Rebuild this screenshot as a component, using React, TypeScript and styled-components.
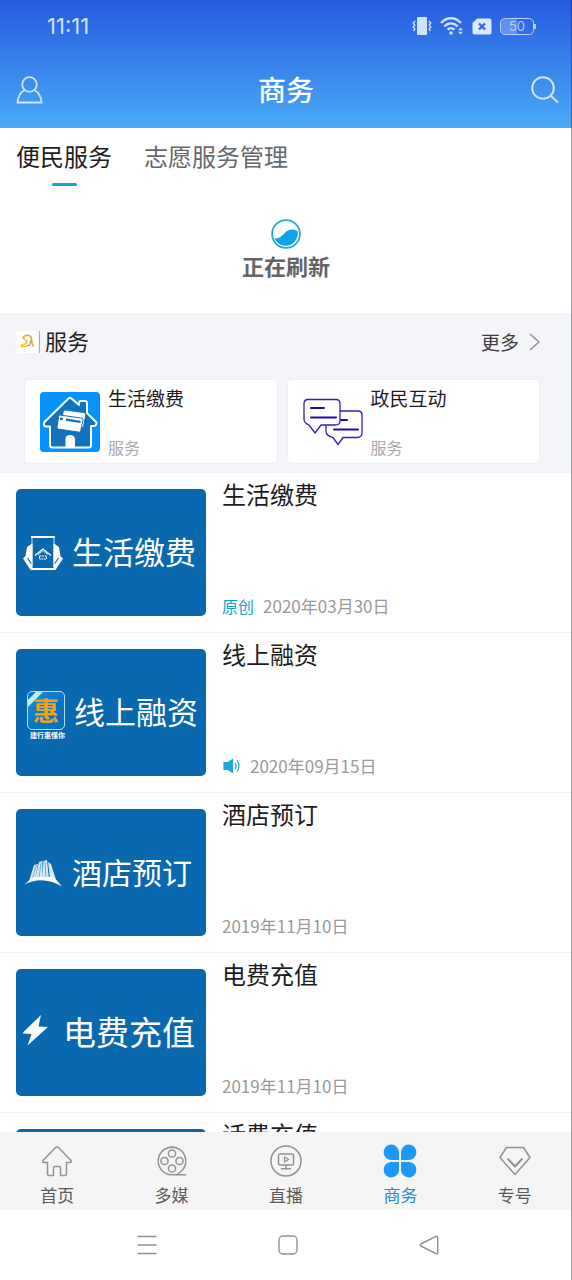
import React from "react";
import styled, { createGlobalStyle } from "styled-components";

const GlobalStyle = createGlobalStyle`
  * { box-sizing: border-box; }
  body {
    margin: 0;
    background: #fff;
    color: #1d1d1f;
    font-family: "Noto Sans CJK SC", "Noto Sans", sans-serif;
  }
  button {
    border: 0;
    padding: 0;
    background: none;
    color: inherit;
    font: inherit;
    cursor: pointer;
  }
  a { color: inherit; text-decoration: none; }
  h1, h2, h3, p, ul { margin: 0; padding: 0; font-weight: 400; }
  ul { list-style: none; }
  svg { display: block; flex: none; }
`;

const Screen = styled.div`
  position: relative;
  display: flex;
  flex-direction: column;
  height: 100vh;
  overflow: hidden;

  &::after {
    content: "";
    position: absolute;
    inset: 0 0 0 auto;
    width: 1px;
    background: rgba(20, 24, 32, 0.4);
    pointer-events: none;
  }
`;

const Header = styled.header`
  flex: none;
  color: #fff;
  background: linear-gradient(#265be0, #3a86ec 55%, #4aaaf6);
`;

const StatusBar = styled.div`
  display: flex;
  align-items: center;
  justify-content: space-between;
  height: 52px;
  padding: 0 38px 0 47px;
  color: #d3e2fb;
`;

const Clock = styled.time`
  font: 400 22px/28px Inter, sans-serif;
`;

const StatusIcons = styled.div`
  display: flex;
  align-items: center;
  gap: 8px;
`;

const Battery = styled.span`
  position: relative;
  width: 34px;
  height: 17px;
  border: 1px solid #b9cff8;
  border-radius: 5px;
  background: linear-gradient(90deg, rgba(190, 212, 250, 0.35) 50%, transparent 50%);
  color: #b9cff8;
  text-align: center;
  font: 400 13px/15px Inter, sans-serif;

  &::after {
    content: "";
    position: absolute;
    top: 5px;
    right: -3px;
    width: 2px;
    height: 5px;
    background: #b9cff8;
  }
`;

const AppBar = styled.div`
  display: grid;
  grid-template-columns: 1fr auto 1fr;
  align-items: center;
  height: 76px;
  padding: 0 13px;
`;

const PageTitle = styled.h1`
  padding-bottom: 2px;
  font-size: 28px;
  line-height: 40px;
  font-weight: 500;
`;

const IconButton = styled.button<{ $end?: boolean }>`
  justify-self: ${(p) => (p.$end ? "end" : "start")};
  padding-left: 3px;
  color: #cfe6fd;
`;

const Content = styled.main`
  flex: 1;
  min-height: 0;
  overflow-y: auto;
  scrollbar-width: none;
`;

const Tabs = styled.nav`
  display: flex;
  gap: 32px;
  padding: 11px 16px 0;
`;

const Tab = styled.button<{ $active?: boolean }>`
  display: flex;
  flex-direction: column;
  align-items: center;
  gap: 10px;
  font-size: 24px;
  line-height: 34px;
  color: ${(p) => (p.$active ? "#1d1d1f" : "#66686b")};

  &::after {
    content: "";
    width: 25px;
    height: 3px;
    border-radius: 2px;
    background: ${(p) => (p.$active ? "#12a3dc" : "transparent")};
  }
`;

const Refresh = styled.div`
  display: flex;
  flex-direction: column;
  align-items: center;
  gap: 1px;
  padding: 33px 0;
  color: #646464;
  font-size: 22px;
  line-height: 30px;
  font-weight: 700;
`;

const Services = styled.section`
  padding: 0 32px 9px 16px;
  background: #f4f5f8;
`;

const ServicesHead = styled.div`
  display: flex;
  align-items: center;
  height: 58px;
`;

const ServicesTitle = styled.h2`
  margin-left: 1px;
  padding: 0 0 3px 5px;
  border-left: 1px solid #a8aaae;
  font-size: 22px;
  line-height: 19px;
`;

const More = styled.a`
  display: flex;
  align-items: center;
  gap: 10px;
  margin-left: auto;
  color: #3c3e42;
  font-size: 19px;
  line-height: 28px;
`;

const CardGrid = styled.div`
  display: grid;
  grid-template-columns: 1fr 1fr;
  gap: 9px;
  padding: 8px 0 0 8px;
`;

const Card = styled.a`
  display: flex;
  align-items: center;
  gap: 8px;
  min-height: 85px;
  padding: 0 15px;
  border: 1px solid #eef0f3;
  border-radius: 5px;
  background: #fff;
`;

const CardText = styled.div`
  display: flex;
  flex-direction: column;
  justify-content: space-between;
  align-self: stretch;
  padding: 6px 0 4px;
  line-height: 24px;
`;

const CardName = styled.h3`
  font-size: 19px;
`;

const CardKind = styled.p`
  color: #a9a9a9;
  font-size: 16px;
`;

const Row = styled.li`
  border-bottom: 1px solid #f2f2f2;
`;

const RowLink = styled.a`
  display: flex;
  gap: 16px;
  padding: 0 16px;
`;

const Thumb = styled.div`
  display: flex;
  align-items: center;
  flex: 0 0 190px;
  gap: 9px;
  height: 127px;
  margin: 16px 0;
  padding-left: 7px;
  border-radius: 5px;
  background: #0a68ae;
  color: #fff;
  white-space: nowrap;
`;

const ThumbTitle = styled.span<{ $size: number }>`
  padding-bottom: 4px;
  font-size: ${(p) => p.$size}px;
  line-height: 44px;
`;

const BankLogo = styled.div`
  display: flex;
  flex-direction: column;
  align-items: flex-end;
  gap: 1px;
  width: 42px;
  padding-top: 6px;
`;

const BankTile = styled.span`
  width: 38px;
  height: 39px;
  border: 1px solid #b5dcf8;
  border-radius: 5px;
  background: linear-gradient(135deg, #0875c6 5px, #c5eefb 6px, #c5eefb 10px, #1687d0 11px, #0875c6 55%, #0b6dbb);
  color: #f1a21c;
  font-size: 26px;
  line-height: 36px;
  font-weight: 700;
  text-align: center;
`;

const BankCaption = styled.span`
  font-size: 7px;
  line-height: 9px;
  font-weight: 700;
`;

const RowText = styled.div`
  display: flex;
  flex: 1;
  flex-direction: column;
  justify-content: space-between;
  min-width: 0;
  padding: 7px 0 14px;
`;

const RowTitle = styled.h3`
  font-size: 24px;
  line-height: 28px;
`;

const Meta = styled.p`
  display: flex;
  align-items: center;
  gap: 9px;
  color: #999;
  font-size: 17px;
  line-height: 24px;
`;

const Badge = styled.span`
  color: #1aa3c9;
  font-size: 16px;
`;

const TabBar = styled.nav`
  display: flex;
  flex: none;
  height: 78px;
  background: #f5f5f5;
`;

const TabItem = styled.button<{ $active?: boolean }>`
  display: flex;
  flex: 1;
  flex-direction: column;
  align-items: center;
  gap: 5px;
  padding-top: 12px;
  color: ${(p) => (p.$active ? "#1d8fd0" : "#5c5c5c")};
  font-size: 17px;
  line-height: 24px;
`;

const SystemNav = styled.nav`
  display: flex;
  flex: none;
  align-items: center;
  height: 70px;
  padding: 0 73px 0 76px;
  background: #fff;
`;

const SystemButton = styled.button`
  display: flex;
  flex: 1;
  justify-content: center;
`;

const PhoneVibrate = () => (
  <svg width="20" height="18" viewBox="0 0 20 18" fill="currentColor">
    <rect x="5" y="0" width="10" height="18" rx="1" />
    <path d="M3.2 4 1.2 6l1.6 2-1.6 2 1.6 2-1 2M16.8 4l2 2-1.6 2 1.6 2-1.6 2 1 2" fill="none" stroke="currentColor" strokeWidth="1.4" />
  </svg>
);

const Wifi = () => (
  <svg width="24" height="18" viewBox="0 0 24 18" fill="none" stroke="currentColor" strokeWidth="2.4">
    <path d="M1 6C7-.4 15-.4 21 6M4.3 9.4c4-4 9.4-4 13.4 0M7.6 12.7c2-2 4.8-2 6.8 0" />
    <circle cx="11" cy="16" r="1.8" fill="currentColor" stroke="none" />
    <path d="M18 13.3 20.5 10.500 23 13.3ZM18 14.8 20.5 17.6 23 14.8Z" fill="currentColor" stroke="none" />
  </svg>
);

const SimOff = () => (
  <svg width="20" height="17" viewBox="0 0 20 17">
    <path d="M5 .5h12.500a2 2 0 0 1 2 2v12a2 2 0 0 1-2 2h-15a2 2 0 0 1-2-2V5Z" fill="#dce8fc" />
    <path d="m7 5.500 6 6m0-6-6 6" stroke="#3568df" strokeWidth="2.4" />
  </svg>
);

const UserIcon = () => (
  <svg width="27" height="28" viewBox="0 0 27 28" fill="none" stroke="currentColor" strokeWidth="1.8">
    <circle cx="13.5" cy="8.5" r="7.3" />
    <path d="M8.5 14.2C4.5 16.2 2 20 1.5 26.500h24c-.5-6.500-3-10.300-7-12.300" />
  </svg>
);

const SearchIcon = () => (
  <svg width="28" height="28" viewBox="0 0 28 28" fill="none" stroke="currentColor" strokeWidth="2" strokeLinecap="round">
    <circle cx="12" cy="12" r="10.8" />
    <path d="m19.500 19.500 7 6.500" />
  </svg>
);

const WaveIcon = () => (
  <svg width="30" height="30" viewBox="0 0 30 30">
    <circle cx="15" cy="15" r="13.9" fill="#fff" stroke="#27a9d6" strokeWidth="1.8" />
    <path d="M3.600 19.500c4-.2 6.500-1.500 9.500-4.800 3.500-4 8.500-5.500 13.600-2.500 1.200 8-4.700 14.600-11.700 14.600-5 0-9.400-2.700-11.400-7.300Z" fill="#0ea3ea" />
  </svg>
);

const ServiceBadge = () => (
  <svg width="22" height="22" viewBox="0 0 22 22" fill="none">
    <rect width="22" height="22" rx="3" fill="#fff" />
    <path d="M7 7.500c1-4 7.500-4.500 8.300-.5.600 3-.3 5.500 2.200 8.500" stroke="#e9a53b" strokeWidth="1.700" />
    <path d="M6.500 7c2 1.500 5 2 4.300 4.500-.5 2.500-4 1-5.800 3.500 3 2.300 6-1 9.500-.6" stroke="#efc333" strokeWidth="1.500" />
    <path d="M11 14.500c2.500 0 3.500-2.500 3.500-5" stroke="#d8823f" />
  </svg>
);

const ChevronRight = () => (
  <svg width="11" height="18" viewBox="0 0 11 18" fill="none" stroke="#8a8c90" strokeWidth="1.4">
    <path d="m1 1 9 8-9 8" />
  </svg>
);

const HousePay = () => (
  <svg width="60" height="60" viewBox="0 0 60 60">
    <rect width="60" height="60" rx="4" fill="#0992fb" />
    <path
      d="M28.500 6.500Q30 5 31.500 6.500L39 13V11q0-2 2-2h4q2 0 2 2v10l9 9q1 1 .2 2.500-.7 1.500-2.200 1.500H51V53q0 2.500-2.500 2.500h-36Q10 55.500 10 53V34.500H6q-1.500 0-2-1.500T4.500 30Z"
      fill="#1272bd"
      stroke="#fff"
      strokeWidth="2"
      strokeLinejoin="round"
    />
    <path d="M25.500 55.500V47q0-4 4.500-4t5 4v8.500Z" fill="#fff" />
    <path d="m25 18.500 19 2.500q1.500.3 1.300 1.800L43 35 22 30l1.500-10q.3-1.500 1.500-1.500Z" fill="#fff" />
    <path d="m20 23 22 3.200q1.200.3 1 1.500l-2.300 11.500q-.3 1.200-1.500 1L18 37q-1.300-.3-1-1.500L18.700 24q.3-1.200 1.300-1Z" fill="#fff" stroke="#1272bd" strokeWidth="1" />
    <path d="m20 26.700 3 .4m3 .5 14.500 2.200" stroke="#1272bd" strokeWidth="2.200" />
  </svg>
);

const ChatBubbles = () => (
  <svg width="60" height="60" viewBox="0 0 60 60" fill="none" stroke="#2a22c8" strokeWidth="1.3" strokeLinejoin="round">
    <path d="M37 19h18q4 0 4 4v18q0 4.500-5 4.500H40l-5 7-5-7q-7-2-7-6v-6" />
    <path d="M5 7.500h28q4 0 4 4V29q0 4-5 4H18l-6 8-6-8q-5-2-5-6V12q0-4.500 4-4.500Z" fill="#fff" />
    <path d="M8 16h13M8 25.500h25M38 28h6M31 37.500h24" stroke="#1510b4" strokeWidth="2" strokeLinecap="round" />
  </svg>
);

const HandsTablet = () => (
  <svg width="40" height="36" viewBox="0 0 40 36" fill="none" stroke="#fff">
    <path d="M9 8.500 4 12 2.500 21 0 23.500 7.500 35 11 30V9ZM31 8.500 36 12l1.500 9 2.500 2.500L32.500 35 29 30V9Z" fill="#fff" stroke="none" />
    <path d="m4.500 23 4 6M35.500 23l-4 6" stroke="#0a68ae" strokeWidth="1.200" />
    <rect x="9.500" y="1" width="21" height="34" fill="#0a68ae" stroke="none" />
    <path d="M9 3v31M31 3v31" strokeWidth=".8" />
    <path d="M8 2h24M8 34h24" strokeWidth="2.200" />
    <path d="m12 20.500 8-6.500 8 6.500" strokeWidth="1.300" />
    <path d="m15 19.700 5-4 5 4M16.500 21h7v3h-7Z" strokeWidth="1" strokeDasharray="2 .6" />
  </svg>
);

const HotelIcon = () => (
  <svg width="40" height="28" viewBox="0 0 40 28" fill="#fff">
    <path d="M1 26Q5 23 9 18h22q4 5 8 9.500Q19 16 1 26Z" />
    <path d="m11 6 4-1-3 15-6 2ZM16 3l3.500-1L19 19l-7 2ZM20.500 2 24 1l2 19-7-1ZM25 3l3 2 5 16-6-2Z" opacity=".85" />
    <path d="m13.500 6-4 13m8.500-15-2 14m6-15 1 15" stroke="#0a68ae" strokeWidth=".5" />
  </svg>
);

const BoltIcon = () => (
  <svg width="31" height="38" viewBox="0 0 31 38" fill="#fff">
    <path d="M18 1-1 19.500 8.500 20 4.500 31.500 25 13l-9.500-.5Z" />
  </svg>
);

const Speaker = () => (
  <svg width="19" height="16" viewBox="0 0 19 16" fill="none" stroke="#1ba9d8" strokeWidth="1.2">
    <path d="M2 4.500h4l4.500-3v13l-4.500-3H2Z" fill="#1ba9d8" />
    <path d="M13 5q2.200 3 0 6M15 2.500q4 5.500 0 11" />
  </svg>
);

const line = { width: 34, height: 34, viewBox: "0 0 34 34", fill: "none", stroke: "#929292", strokeWidth: 1.5 };

const HomeIcon = () => (
  <svg {...line} strokeLinejoin="round">
    <path d="M15.300 3.700 3 16.500q-1 2 1 2h3.500V30q0 1.500 1.500 1.500h4.500V24q0-1.500 1.500-1.500h4q1.500 0 1.500 1.500v7.500H25q1.500 0 1.500-1.500V18.500H30q2 0 1-2L18.700 3.700q-1.700-1.400-3.400 0Z" />
  </svg>
);

const ReelIcon = () => (
  <svg {...line}>
    <path d="M31 30.800H17A13.800 13.800 0 1 1 26.500 27L22.500 30" />
    <circle cx="17" cy="9.5" r="3.6" />
    <circle cx="17" cy="24.5" r="3.6" />
    <circle cx="9.5" cy="17" r="3.6" />
    <circle cx="24.5" cy="17" r="3.6" />
  </svg>
);

const LiveIcon = () => (
  <svg {...line}>
    <circle cx="17" cy="17" r="15" />
    <rect x="9.5" y="10" width="15" height="11" rx="1.5" />
    <path d="M17 21v3.500M12 24.700h10" />
    <path d="m15.500 13 4 2.500-4 2.500Z" strokeWidth="1.2" />
  </svg>
);

const CloverIcon = () => (
  <svg width="34" height="34" viewBox="0 0 34 34" fill="#1b98f8">
    <path d="M16 16H7.800A7.700 7.700 0 1 1 16 8ZM18 16V8a7.700 7.700 0 1 1 8.200 8ZM16 18v8a7.700 7.700 0 1 1-8.200-8ZM18 18h8.200A7.700 7.700 0 1 1 18 26Z" />
  </svg>
);

const GemIcon = () => (
  <svg {...line} strokeLinejoin="round">
    <path d="M8.500 3.500h17L32 13.500 17 30.500 2 13.500Z" />
    <path d="m9.500 14.500 7.500 8 7.500-8" strokeWidth="2" />
  </svg>
);

const RecentsIcon = () => (
  <svg width="20" height="20" viewBox="0 0 20 20" stroke="#909090" strokeWidth="1.4">
    <path d="M.5 1.500h19M.5 10h19M.5 18.500h19" />
  </svg>
);

const OverviewIcon = () => (
  <svg width="20" height="20" viewBox="0 0 20 20" fill="none" stroke="#909090" strokeWidth="1.4">
    <rect x="1" y="1" width="18" height="18" rx="4" />
  </svg>
);

const BackIcon = () => (
  <svg width="20" height="20" viewBox="0 0 20 20" fill="none" stroke="#909090" strokeWidth="1.4" strokeLinejoin="round">
    <path d="M17 1.400 1.800 9q-1.300 1 0 2L17 18.600q1.700.6 1.700-1V2.400q0-1.600-1.700-1Z" />
  </svg>
);

const cards = [
  { name: "生活缴费", icon: <HousePay /> },
  { name: "政民互动", icon: <ChatBubbles /> },
];

const rows = [
  { title: "生活缴费", date: "2020年03月30日", size: 31, icon: <HandsTablet />, mark: <Badge>原创</Badge> },
  {
    title: "线上融资",
    date: "2020年09月15日",
    size: 31,
    icon: (
      <BankLogo>
        <BankTile>惠</BankTile>
        <BankCaption>建行惠懂你</BankCaption>
      </BankLogo>
    ),
    mark: <Speaker />,
  },
  { title: "酒店预订", date: "2019年11月10日", size: 30, icon: <HotelIcon /> },
  { title: "电费充值", date: "2019年11月10日", size: 33, icon: <BoltIcon /> },
  { title: "话费充值", date: "2019年11月10日", size: 33, icon: <BoltIcon /> },
];

const tabs = [
  { label: "首页", icon: <HomeIcon /> },
  { label: "多媒", icon: <ReelIcon /> },
  { label: "直播", icon: <LiveIcon /> },
  { label: "商务", icon: <CloverIcon />, active: true },
  { label: "专号", icon: <GemIcon /> },
];

export default function App() {
  return (
    <Screen>
      <GlobalStyle />
      <Header>
        <StatusBar>
          <Clock>11:11</Clock>
          <StatusIcons>
            <PhoneVibrate />
            <Wifi />
            <SimOff />
            <Battery>50</Battery>
          </StatusIcons>
        </StatusBar>
        <AppBar>
          <IconButton aria-label="我的"><UserIcon /></IconButton>
          <PageTitle>商务</PageTitle>
          <IconButton $end aria-label="搜索"><SearchIcon /></IconButton>
        </AppBar>
      </Header>

      <Content>
        <Tabs>
          <Tab $active>便民服务</Tab>
          <Tab>志愿服务管理</Tab>
        </Tabs>
        <Refresh role="status">
          <WaveIcon />
          正在刷新
        </Refresh>

        <Services>
          <ServicesHead>
            <ServiceBadge />
            <ServicesTitle>服务</ServicesTitle>
            <More href="#more">更多<ChevronRight /></More>
          </ServicesHead>
          <CardGrid>
            {cards.map((card) => (
              <Card href="#service" key={card.name}>
                {card.icon}
                <CardText>
                  <CardName>{card.name}</CardName>
                  <CardKind>服务</CardKind>
                </CardText>
              </Card>
            ))}
          </CardGrid>
        </Services>

        <ul>
          {rows.map((row) => (
            <Row key={row.title}>
              <RowLink href="#article">
                <Thumb>
                  {row.icon}
                  <ThumbTitle $size={row.size}>{row.title}</ThumbTitle>
                </Thumb>
                <RowText>
                  <RowTitle>{row.title}</RowTitle>
                  <Meta>
                    {row.mark}
                    <span>{row.date}</span>
                  </Meta>
                </RowText>
              </RowLink>
            </Row>
          ))}
        </ul>
      </Content>

      <TabBar>
        {tabs.map((tab) => (
          <TabItem key={tab.label} $active={tab.active}>
            {tab.icon}
            {tab.label}
          </TabItem>
        ))}
      </TabBar>
      <SystemNav>
        <SystemButton aria-label="菜单"><RecentsIcon /></SystemButton>
        <SystemButton aria-label="主屏幕"><OverviewIcon /></SystemButton>
        <SystemButton aria-label="返回"><BackIcon /></SystemButton>
      </SystemNav>
    </Screen>
  );
}
